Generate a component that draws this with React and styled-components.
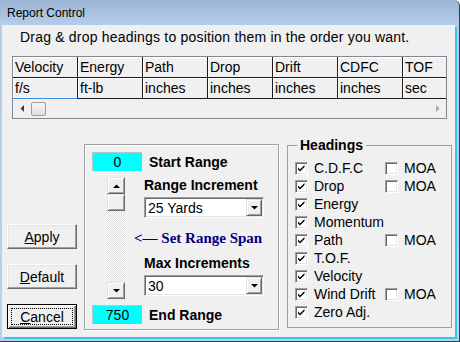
import React from "react";
import styled, { createGlobalStyle, css } from "styled-components";

const GlobalStyle = createGlobalStyle`
  html, body {
    margin: 0;
    padding: 0;
    background: #ffffff;
  }
  body {
    font-family: "Liberation Sans", Arial, sans-serif;
    font-size: 14px;
    color: #000;
  }
  * {
    box-sizing: border-box;
  }
`;

const Window = styled.div`
  width: 460px;
  height: 342px;
  display: flex;
  flex-direction: column;
  background: linear-gradient(#9cb5d4, #b5cde9 25px, #b9d1ea);
  border-right: 1px solid #23405f;
  border-bottom: 1px solid #23405f;
  border-top-right-radius: 6px;
  overflow: hidden;
`;

const TitleBar = styled.div`
  flex: none;
  height: 25px;
  padding: 1px 0 0 7px;
  display: flex;
  align-items: center;
  font-size: 12px;
`;

const Client = styled.div`
  flex: 1;
  margin: 0 4px 4px 2px;
  background: #f0f0f0;
  box-shadow: 2px 2px 0 #39c5ec;
  display: flex;
  flex-direction: column;
`;

const Instruction = styled.div`
  height: 31px;
  padding: 4px 0 0 18px;
  line-height: 16px;
  letter-spacing: 0.2px;
`;

/* ---- heading grid ---- */

const Grid = styled.div`
  margin-left: 10px;
  width: 435px;
  height: 63px;
  border: 1px solid #828790;
  background: #f0f0f0;
  overflow: hidden;
`;

const GridRow = styled.div`
  display: flex;
  height: 21px;
`;

const Cell = styled.div`
  flex: none;
  width: 65px;
  height: 100%;
  padding-left: 2px;
  line-height: 20px;
  white-space: nowrap;
  overflow: hidden;
  border-right: 1px solid #1c1c1c;
  border-bottom: 1px solid ${(p) => (p.$focus ? "#3a8ee6" : "#1c1c1c")};
  box-shadow: inset 1px 1px 0 #ffffff;
`;

const HScroll = styled.div`
  height: 19px;
  display: flex;
  align-items: center;
`;

const ArrowSlot = styled.div`
  width: 17px;
  height: 19px;
  flex: none;
  display: flex;
  align-items: center;
  justify-content: center;
`;

const HThumb = styled.div`
  width: 15px;
  height: 14px;
  margin-left: 1px;
  border: 1px solid #9c9c9c;
  border-radius: 2px;
  background: linear-gradient(#f6f6f6, #dedede);
`;

const Spacer = styled.div`
  flex: 1;
`;

/* ---- lower area ---- */

const Lower = styled.div`
  display: flex;
  align-items: flex-start;
  margin-top: 18px;
  padding-left: 5px;
`;

const ButtonColumn = styled.div`
  display: flex;
  flex-direction: column;
  gap: 15px;
  margin-top: 87px;
`;

const Button = styled.button`
  width: 70px;
  height: 25px;
  padding: 0;
  font: 14px "Liberation Sans", Arial, sans-serif;
  color: #000;
  background: #f0f0f0;
  border: 1px solid;
  border-color: #ffffff #696969 #696969 #ffffff;
  box-shadow: inset -1px -1px 0 #a0a0a0, inset 1px 1px 0 #e3e3e3;
  display: flex;
  align-items: stretch;

  ${(p) =>
    p.$default &&
    css`
      border-color: #000;
      box-shadow: inset 1px 1px 0 #ffffff, inset -1px -1px 0 #696969,
        inset -2px -2px 0 #a0a0a0;
    `}
`;

const ButtonFace = styled.span`
  flex: 1;
  margin: 3px;
  display: flex;
  align-items: center;
  justify-content: center;
  border: 1px dotted ${(p) => (p.$focus ? "#000" : "transparent")};
`;

const RangeFrame = styled.div`
  width: 195px;
  height: 186px;
  margin: 7px 0 0 7px;
  padding: 7px 0 0 7px;
  border: 1px solid #a0a0a0;
  box-shadow: inset 1px 1px 0 #ffffff, 1px 1px 0 #ffffff;
`;

const RangeRow = styled.div`
  display: flex;
  align-items: center;
  gap: 7px;
  margin-top: ${(p) => p.$top || 0}px;
`;

const CyanBox = styled.div`
  width: 50px;
  height: 19px;
  background: #00ffff;
  border-top: 1px solid #b4c8c8;
  border-left: 1px solid #b4c8c8;
  text-align: center;
  line-height: 18px;
`;

const BoldLabel = styled.div`
  font-weight: bold;
  line-height: 16px;
  margin-top: ${(p) => p.$top || 0}px;
`;

const SpanArea = styled.div`
  display: flex;
  gap: 19px;
  margin-top: 6px;
  padding-left: 15px;
`;

const VScroll = styled.div`
  width: 18px;
  height: 122px;
  display: flex;
  flex-direction: column;
  background: repeating-conic-gradient(#ffffff 0 25%, #dcdcdc 0 50%) 0 0 / 2px
    2px;
`;

const ScrollButton = styled.div`
  width: 18px;
  height: 17px;
  flex: none;
  background: #f0f0f0;
  border: 1px solid;
  border-color: #e3e3e3 #696969 #696969 #e3e3e3;
  box-shadow: inset 1px 1px 0 #ffffff, inset -1px -1px 0 #a0a0a0;
  display: flex;
  align-items: center;
  justify-content: center;
`;

const SpanColumn = styled.div`
  display: flex;
  flex-direction: column;
`;

const Select = styled.div`
  width: 120px;
  height: 21px;
  margin-top: 4px;
  background: #ffffff;
  border: 1px solid;
  border-color: #a0a0a0 #ffffff #ffffff #a0a0a0;
  box-shadow: inset 1px 1px 0 #696969, inset -1px -1px 0 #e3e3e3;
  display: flex;
  align-items: center;
  padding: 1px 1px 1px 3px;
`;

const SelectText = styled.span`
  flex: 1;
`;

const DropButton = styled(ScrollButton)`
  width: 16px;
  height: 17px;
`;

const SpanHint = styled.div`
  margin: 12px 0 0 -10px;
  font: bold 15px "Liberation Serif", "Times New Roman", serif;
  line-height: 16px;
  color: #000080;
  white-space: nowrap;
`;

/* ---- headings group ---- */

const Group = styled.fieldset`
  margin: 0 0 0 8px;
  width: 165px;
  height: 191px;
  min-width: 0;
  padding: 6px 0 0 7px;
  border: 1px solid #a0a0a0;
`;

const Legend = styled.legend`
  margin-left: 2px;
  padding: 0 3px;
  font-weight: bold;
  line-height: 16px;
`;

const CheckRow = styled.div`
  display: flex;
  align-items: center;
  height: 18px;
`;

const CheckItem = styled.label`
  display: flex;
  align-items: center;
  gap: 6px;
  width: ${(p) => (p.$wide ? "90px" : "auto")};
  white-space: nowrap;
`;

const Box = styled.span`
  width: 13px;
  height: 13px;
  flex: none;
  background: #ffffff;
  border: 1px solid;
  border-color: #a0a0a0 #ffffff #ffffff #a0a0a0;
  box-shadow: inset 1px 1px 0 #696969, inset -1px -1px 0 #e3e3e3;
  display: flex;
`;

const Triangle = ({ dir, color = "#000" }) => {
  const pts = {
    up: "0,4 7,4 3.5,0.5",
    down: "0,0 7,0 3.5,3.5",
    left: "4,0 4,7 0.5,3.5",
    right: "0,0 0,7 3.5,3.5",
  }[dir];
  const horiz = dir === "left" || dir === "right";
  return (
    <svg width={horiz ? 4 : 7} height={horiz ? 7 : 4} viewBox={horiz ? "0 0 4 7" : "0 0 7 4"}>
      <polygon points={pts} fill={color} />
    </svg>
  );
};

const Check = ({ checked }) => (
  <Box>
    {checked && (
      <svg width="11" height="11" viewBox="0 0 11 11">
        <path d="M2 4.5 L4 6.5 L8.5 2 L8.5 4 L4 8.5 L2 6.5 Z" fill="#000" />
      </svg>
    )}
  </Box>
);

const headings = [
  ["Velocity", "f/s"],
  ["Energy", "ft-lb"],
  ["Path", "inches"],
  ["Drop", "inches"],
  ["Drift", "inches"],
  ["CDFC", "inches"],
  ["TOF", "sec"],
];

const checks = [
  { label: "C.D.F.C", moa: true },
  { label: "Drop", moa: true },
  { label: "Energy" },
  { label: "Momentum" },
  { label: "Path", moa: true },
  { label: "T.O.F." },
  { label: "Velocity" },
  { label: "Wind Drift", moa: true },
  { label: "Zero Adj." },
];

const App = () => {
  return (
    <>
      <GlobalStyle />
      <Window>
        <TitleBar>Report Control</TitleBar>
        <Client>
          <Instruction>
            Drag &amp; drop headings to position them in the order you want.
          </Instruction>

          <Grid>
            <GridRow>
              {headings.map(([name]) => (
                <Cell key={name}>{name}</Cell>
              ))}
            </GridRow>
            <GridRow>
              {headings.map(([name, unit], i) => (
                <Cell key={name} $focus={i === 0}>
                  {unit}
                </Cell>
              ))}
            </GridRow>
            <HScroll>
              <ArrowSlot>
                <Triangle dir="left" color="#3c3c3c" />
              </ArrowSlot>
              <HThumb />
              <Spacer />
              <ArrowSlot>
                <Triangle dir="right" color="#a8a8a8" />
              </ArrowSlot>
            </HScroll>
          </Grid>

          <Lower>
            <ButtonColumn>
              <Button>
                <ButtonFace>
                  <u>A</u>pply
                </ButtonFace>
              </Button>
              <Button>
                <ButtonFace>
                  <u>D</u>efault
                </ButtonFace>
              </Button>
              <Button $default>
                <ButtonFace $focus>
                  <u>C</u>ancel
                </ButtonFace>
              </Button>
            </ButtonColumn>

            <RangeFrame>
              <RangeRow>
                <CyanBox>0</CyanBox>
                <BoldLabel>Start Range</BoldLabel>
              </RangeRow>
              <SpanArea>
                <VScroll>
                  <ScrollButton>
                    <Triangle dir="up" />
                  </ScrollButton>
                  <ScrollButton>&nbsp;</ScrollButton>
                  <Spacer />
                  <ScrollButton>
                    <Triangle dir="down" />
                  </ScrollButton>
                </VScroll>
                <SpanColumn>
                  <BoldLabel>Range Increment</BoldLabel>
                  <Select>
                    <SelectText>25 Yards</SelectText>
                    <DropButton>
                      <Triangle dir="down" />
                    </DropButton>
                  </Select>
                  <SpanHint>&lt;— Set Range Span</SpanHint>
                  <BoldLabel $top={9}>Max Increments</BoldLabel>
                  <Select>
                    <SelectText>30</SelectText>
                    <DropButton>
                      <Triangle dir="down" />
                    </DropButton>
                  </Select>
                </SpanColumn>
              </SpanArea>
              <RangeRow $top={6}>
                <CyanBox>750</CyanBox>
                <BoldLabel>End Range</BoldLabel>
              </RangeRow>
            </RangeFrame>

            <Group>
              <Legend>Headings</Legend>
              {checks.map((c) => (
                <CheckRow key={c.label}>
                  <CheckItem $wide>
                    <Check checked />
                    {c.label}
                  </CheckItem>
                  {c.moa && (
                    <CheckItem>
                      <Check />
                      MOA
                    </CheckItem>
                  )}
                </CheckRow>
              ))}
            </Group>
          </Lower>
        </Client>
      </Window>
    </>
  );
};

export default App;
